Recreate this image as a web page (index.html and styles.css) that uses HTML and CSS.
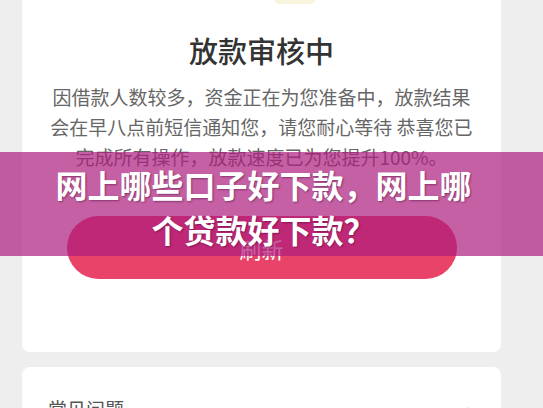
FILE: index.html
```html
<!DOCTYPE html>
<html lang="zh-CN">
  <head>
    <meta charset="UTF-8" />
    <meta name="viewport" content="width=device-width, initial-scale=1.0" />
    <title>放款审核中</title>
    <link rel="stylesheet" href="styles.css">
  </head>
  <body>
    <main class="page">
      <section class="card status">
        <div class="status-icon"></div>
        <h1 class="status-title">放款审核中</h1>
        <p class="status-text">因借款人数较多，资金正在为您准备中，放款结果会在早八点前短信通知您，请您耐心等待 恭喜您已完成所有操作，放款速度已为您提升100%。</p>
        <button class="refresh-btn">刷新</button>
      </section>

      <section class="card faq">
        <span class="faq-title">常见问题</span>
        <svg class="faq-arrow" width="12" height="20" viewBox="0 0 12 20">
          <path d="M2 2 L10 10 L2 18" fill="none" stroke="#bbb" stroke-width="2" />
        </svg>
      </section>
    </main>

    <div class="banner">网上哪些口子好下款，网上哪个贷款好下款？</div>
  </body>
</html>
```

FILE: styles.css
```css
body {
  margin: 0;
  background: #eeeeee;
  font-family: "Noto Sans CJK SC", "Noto Sans", sans-serif;
  overflow: hidden;
}

.page {
  padding: 0 42px 0 22px;
}

.card {
  background: #fff;
  border-radius: 8px;
}

.status {
  border-radius: 0 0 8px 8px;
  padding: 0 26px 73px;
  text-align: center;
}

.status-icon {
  width: 40px;
  height: 4px;
  margin-left: 227px;
  background: #f8f4de;
  border-radius: 0 0 20px 20px;
}

.status-title {
  margin: 26px 0 0;
  font-size: 29px;
  line-height: 40px;
  font-weight: 500;
  color: #333;
}

.status-text {
  margin: 12px 0 0;
  font-size: 19px;
  line-height: 30px;
  color: #666;
}

.refresh-btn {
  display: block;
  width: 390px;
  height: 63px;
  margin: 44px auto 0;
  border: none;
  border-radius: 32px;
  background: #e94369;
  color: #fff;
  font-family: inherit;
  font-size: 22px;
}

.faq {
  margin-top: 15px;
  padding: 25px 24px 20px 26px;
  display: flex;
  justify-content: space-between;
  align-items: center;
}

.faq-title {
  font-size: 19px;
  line-height: 30px;
  color: #555;
}

.faq-arrow {
  margin-top: 14px;
}

.banner {
  position: absolute;
  left: 0;
  right: 0;
  top: 152px;
  height: 104px;
  box-sizing: border-box;
  padding: 10px 66px 4px 50px;
  background: rgba(172, 28, 126, 0.7);
  color: #fff;
  font-size: 32px;
  font-weight: 700;
  line-height: 45px;
  text-align: center;
  text-shadow: 1px 1px 2px rgba(60, 0, 40, 0.45);
}
```
